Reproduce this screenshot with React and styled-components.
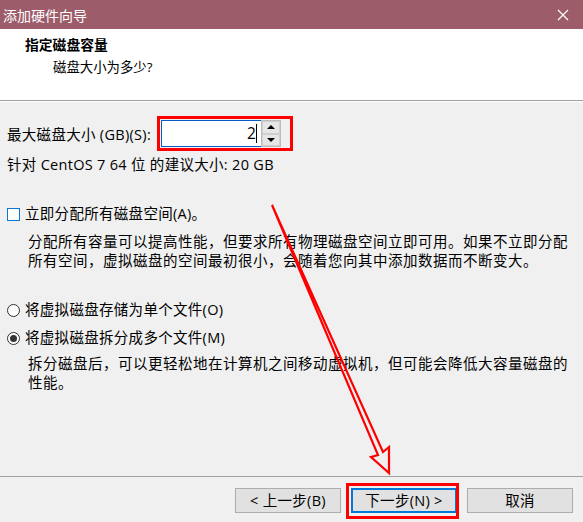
import React from 'react'
import styled, { createGlobalStyle } from 'styled-components'

const GlobalStyle = createGlobalStyle`
    html, body {
        margin: 0;
        padding: 0;
        background: #f0f0f0;
    }
    body {
        font-family: "Segoe UI", "Open Sans", "Noto Sans CJK SC", sans-serif;
        font-size: 14.5px;
        letter-spacing: 0.3px;
        color: #000;
    }
`

const Window = styled.div`
    position: relative;
    width: 583px;
    height: 522px;
    display: flex;
    flex-direction: column;
    background: #f0f0f0;
    overflow: hidden;
`

const TitleBar = styled.div`
    height: 29px;
    flex: none;
    display: flex;
    align-items: center;
    justify-content: space-between;
    background: #9d5c6a;
    color: #fff;
    padding: 0 14px 0 3px;
    font-size: 14px;
    letter-spacing: 0;
    .close {
        display: flex;
        width: 12px;
        height: 12px;
    }
`

const Header = styled.div`
    height: 72px;
    flex: none;
    background: #fff;
    border-bottom: 1px solid #a0a0a0;
    padding: 5px 0 0 25px;
    box-sizing: border-box;
    font-size: 13.4px;
    letter-spacing: 0;
    h1 {
        margin: 0;
        font-size: 13.8px;
        font-weight: 700;
        line-height: 22px;
    }
    p {
        margin: 0;
        padding-left: 28px;
        line-height: 22px;
    }
`

const Body = styled.div`
    flex: 1;
    padding: 18px 7px 0;
    border-top: 1px solid #fff;
`

const SizeRow = styled.div`
    display: flex;
    align-items: center;
    height: 27px;
    gap: 10px;
`

const SpinBox = styled.div`
    position: relative;
    display: flex;
    height: 27px;
    &::after {
        content: "";
        position: absolute;
        inset: -4px -12px -4px -4px;
        border: 3px solid #ff0000;
        pointer-events: none;
    }
`

const SpinInput = styled.div`
    width: 100px;
    box-sizing: border-box;
    border: 1px solid #0a5bc4;
    border-right: none;
    background: #fff;
    display: flex;
    align-items: center;
    justify-content: flex-end;
    padding-right: 4px;
    font-size: 15.5px;
    span {
        border-right: 1px solid #000;
        line-height: 19px;
    }
`

const SpinButtons = styled.div`
    width: 20px;
    display: flex;
    flex-direction: column;
    border: 1px solid #bcbcbc;
    box-sizing: border-box;
    background: #f0f0f0;
`

const SpinArrow = styled.div`
    flex: 1;
    display: flex;
    align-items: center;
    justify-content: center;
    background: #e6e6e6;
    border: 1px solid #d0d0d0;
    &::before {
        content: "";
        border-left: 4px solid transparent;
        border-right: 4px solid transparent;
        ${p => p.$down ? 'border-top: 4px solid #000;' : 'border-bottom: 4px solid #000;'}
    }
`

const Line = styled.div`
    line-height: 20px;
    margin-top: ${p => p.$top || 0}px;
`

const Option = styled.div`
    display: flex;
    align-items: center;
    gap: 5px;
    line-height: 20px;
    margin-top: ${p => p.$top || 0}px;
`

const CheckBox = styled.span`
    width: 13px;
    height: 13px;
    box-sizing: border-box;
    border: 1px solid #0a78d4;
    background: #fff;
    flex: none;
`

const Radio = styled.span`
    width: 13px;
    height: 13px;
    box-sizing: border-box;
    border-radius: 50%;
    border: 1px solid #333;
    background: #fff;
    flex: none;
    display: flex;
    align-items: center;
    justify-content: center;
    &::before {
        content: "";
        width: 7px;
        height: 7px;
        border-radius: 50%;
        background: ${p => p.$checked ? '#333' : 'transparent'};
    }
`

const Note = styled.p`
    margin: ${p => p.$top || 0}px 0 0;
    padding-left: 21px;
    line-height: 19px;
    width: 550px;
    letter-spacing: 0.5px;
`

const Footer = styled.div`
    flex: none;
    height: 46px;
    border-top: 1px solid #a0a0a0;
    display: flex;
    justify-content: flex-end;
    align-items: flex-start;
    padding: 11px 10px 0 0;
    box-sizing: border-box;
    gap: 10px;
`

const Button = styled.button`
    position: relative;
    width: 106px;
    height: 25px;
    box-sizing: border-box;
    font: inherit;
    letter-spacing: inherit;
    color: #000;
    background: #e1e1e1;
    border: ${p => p.$default ? '2px solid #0078d7' : '1px solid #adadad'};
    padding: 0;
    line-height: 20px;
    ${p => p.$marked && `
        &::after {
            content: "";
            position: absolute;
            inset: -${p.$default ? 7 : 6}px -4px -8px -7px;
            border: 3px solid #ff0000;
        }
    `}
`

const Overlay = styled.svg`
    position: absolute;
    left: 0;
    top: 0;
    pointer-events: none;
`

export default function App() {
    return (
        <>
            <GlobalStyle />
            <Window>
                <TitleBar>
                    <span>添加硬件向导</span>
                    <svg className="close" viewBox="0 0 12 12">
                        <path d="M1 1 L11 11 M11 1 L1 11" stroke="#fff" strokeWidth="1.2" />
                    </svg>
                </TitleBar>
                <Header>
                    <h1>指定磁盘容量</h1>
                    <p>磁盘大小为多少?</p>
                </Header>
                <Body>
                    <SizeRow>
                        <span>最大磁盘大小 (GB)(S):</span>
                        <SpinBox>
                            <SpinInput><span>2</span></SpinInput>
                            <SpinButtons>
                                <SpinArrow />
                                <SpinArrow $down />
                            </SpinButtons>
                        </SpinBox>
                    </SizeRow>
                    <Line $top={8}>针对 CentOS 7 64 位 的建议大小: 20 GB</Line>
                    <Option $top={29}>
                        <CheckBox />
                        <span>立即分配所有磁盘空间(A)。</span>
                    </Option>
                    <Note $top={8}>分配所有容量可以提高性能，但要求所有物理磁盘空间立即可用。如果不立即分配所有空间，虚拟磁盘的空间最初很小，会随着您向其中添加数据而不断变大。</Note>
                    <Option $top={30}>
                        <Radio />
                        <span>将虚拟磁盘存储为单个文件(O)</span>
                    </Option>
                    <Option $top={8}>
                        <Radio $checked />
                        <span>将虚拟磁盘拆分成多个文件(M)</span>
                    </Option>
                    <Note $top={6}>拆分磁盘后，可以更轻松地在计算机之间移动虚拟机，但可能会降低大容量磁盘的性能。</Note>
                </Body>
                <Footer>
                    <Button>&lt; 上一步(B)</Button>
                    <Button $default $marked>下一步(N) &gt;</Button>
                    <Button>取消</Button>
                </Footer>
                <Overlay width="583" height="522" viewBox="0 0 583 522">
                    <polygon
                        points="272,205 383,452 389,447 389,473 371,457 378,455"
                        fill="none"
                        stroke="#ff0000"
                        strokeWidth="2.2"
                        strokeLinejoin="miter"
                    />
                </Overlay>
            </Window>
        </>
    )
}
